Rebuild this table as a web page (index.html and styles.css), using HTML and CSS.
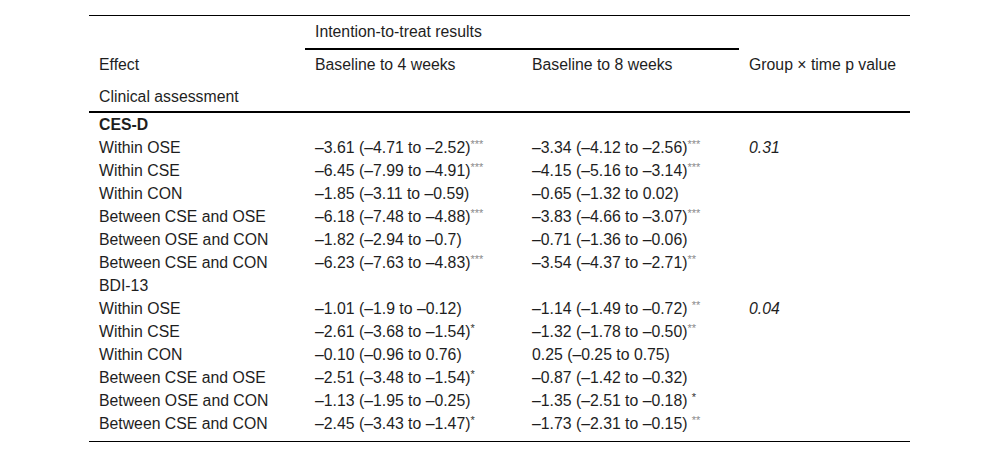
FILE: index.html
```html
<!DOCTYPE html>
<html lang="en">
<head>
<meta charset="utf-8">
<title>Intention-to-treat results</title>
<link rel="stylesheet" href="styles.css">
</head>
<body>
<div class="wrap">
<table class="results">
  <colgroup>
    <col class="c1"><col class="c2"><col class="c3"><col class="c4">
  </colgroup>
  <thead>
    <tr class="hrow">
      <th></th>
      <th colspan="2" class="group">Intention-to-treat results</th>
      <th></th>
    </tr>
    <tr class="hrow second">
      <th>Effect</th>
      <th>Baseline to 4 weeks</th>
      <th>Baseline to 8 weeks</th>
      <th>Group × time p value</th>
    </tr>
    <tr class="hrow third">
      <th>Clinical assessment</th>
      <th></th>
      <th></th>
      <th></th>
    </tr>
  </thead>
  <tbody>
    <tr><td class="bold">CES-D</td><td></td><td></td><td></td></tr>
    <tr><td>Within OSE</td><td>–3.61 (–4.71 to –2.52)<sup class="sig">***</sup></td><td>–3.34 (–4.12 to –2.56)<sup class="sig">***</sup></td><td class="p">0.31</td></tr>
    <tr><td>Within CSE</td><td>–6.45 (–7.99 to –4.91)<sup class="sig">***</sup></td><td>–4.15 (–5.16 to –3.14)<sup class="sig">***</sup></td><td></td></tr>
    <tr><td>Within CON</td><td>–1.85 (–3.11 to –0.59)</td><td>–0.65 (–1.32 to 0.02)</td><td></td></tr>
    <tr><td>Between CSE and OSE</td><td>–6.18 (–7.48 to –4.88)<sup class="sig">***</sup></td><td>–3.83 (–4.66 to –3.07)<sup class="sig">***</sup></td><td></td></tr>
    <tr><td>Between OSE and CON</td><td>–1.82 (–2.94 to –0.7)</td><td>–0.71 (–1.36 to –0.06)</td><td></td></tr>
    <tr><td>Between CSE and CON</td><td>–6.23 (–7.63 to –4.83)<sup class="sig">***</sup></td><td>–3.54 (–4.37 to –2.71)<sup class="sig">**</sup></td><td></td></tr>
    <tr><td>BDI-13</td><td></td><td></td><td></td></tr>
    <tr><td>Within OSE</td><td>–1.01 (–1.9 to –0.12)</td><td>–1.14 (–1.49 to –0.72) <sup class="sig">**</sup></td><td class="p">0.04</td></tr>
    <tr><td>Within CSE</td><td>–2.61 (–3.68 to –1.54)<sup class="sig one">*</sup></td><td>–1.32 (–1.78 to –0.50)<sup class="sig">**</sup></td><td></td></tr>
    <tr><td>Within CON</td><td>–0.10 (–0.96 to 0.76)</td><td>0.25 (–0.25 to 0.75)</td><td></td></tr>
    <tr><td>Between CSE and OSE</td><td>–2.51 (–3.48 to –1.54)<sup class="sig one">*</sup></td><td>–0.87 (–1.42 to –0.32)</td><td></td></tr>
    <tr><td>Between OSE and CON</td><td>–1.13 (–1.95 to –0.25)</td><td>–1.35 (–2.51 to –0.18) <sup class="sig one">*</sup></td><td></td></tr>
    <tr class="last"><td>Between CSE and CON</td><td>–2.45 (–3.43 to –1.47)<sup class="sig one">*</sup></td><td>–1.73 (–2.31 to –0.15) <sup class="sig">**</sup></td><td></td></tr>
  </tbody>
</table>
</div>
</body>
</html>
```

FILE: styles.css
```css
html, body {
  margin: 0;
  padding: 0;
  background: #fff;
}

.wrap {
  padding: 15px 0 0 89px;
}

.results {
  width: 821px;
  border-collapse: collapse;
  table-layout: fixed;
  font-family: "Liberation Sans", Arial, sans-serif;
  font-size: 15.8px;
  color: #1e1e1e;
  border-top: 1px solid #000;
  border-bottom: 1px solid #000;
}

.c1 { width: 216px; }
.c2 { width: 217px; }
.c3 { width: 217px; }
.c4 { width: 171px; }

.results th {
  font-weight: normal;
  text-align: left;
  padding: 7px 10px;
  line-height: 18px;
  white-space: nowrap;
}

.results tr.second th {
  padding-top: 6px;
}

.results tr.third th {
  padding-bottom: 5px;
  border-bottom: 2px solid #000;
}

.results th.group {
  border-bottom: 2px solid #000;
}

.results td {
  padding: 3px 10px;
  line-height: 17px;
  white-space: nowrap;
  vertical-align: top;
}

.results tr.last td {
  padding-bottom: 9px;
}

.bold {
  font-weight: bold;
}

.p {
  font-style: italic;
}

.sig {
  font-size: 11px;
  line-height: 0;
  vertical-align: 5px;
  color: #8a8a8a;
}

.sig.one {
  color: #333;
}
```
